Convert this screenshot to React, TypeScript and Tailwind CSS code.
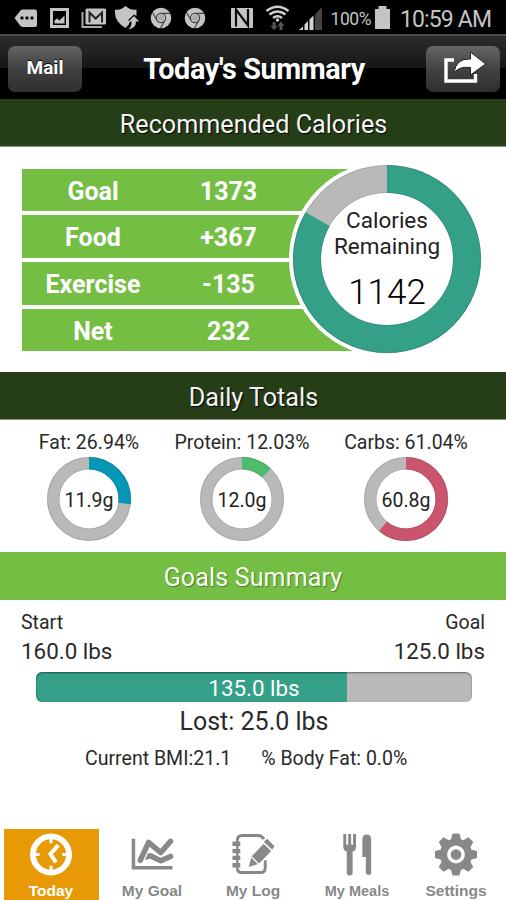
import type { ReactNode } from "react";

const CALORIE_ROWS = [
  { label: "Goal", value: "1373" },
  { label: "Food", value: "+367" },
  { label: "Exercise", value: "-135" },
  { label: "Net", value: "232" },
];

const MACROS = [
  { label: "Fat: 26.94%", grams: "11.9g", share: 0.2694, color: "#0597b5", col: "w-[178px]" },
  { label: "Protein: 12.03%", grams: "12.0g", share: 0.1203, color: "#4dbd6c", col: "w-[128px]" },
  { label: "Carbs: 61.04%", grams: "60.8g", share: 0.6104, color: "#cb556c", col: "w-[200px]" },
];

function Donut({
  size,
  thickness,
  share,
  color,
}: {
  size: number;
  thickness: number;
  share: number;
  color: string;
}) {
  const c = size / 2;
  const r = c - thickness / 2;
  const length = 2 * Math.PI * r;
  return (
    <svg width={size} height={size} viewBox={`0 0 ${size} ${size}`} className="block">
      <circle cx={c} cy={c} r={r} fill="#fff" stroke="#b9b9b9" strokeWidth={thickness} />
      <circle
        cx={c}
        cy={c}
        r={r}
        fill="none"
        stroke={color}
        strokeWidth={thickness}
        strokeDasharray={`${length * share} ${length}`}
        transform={`rotate(-90 ${c} ${c})`}
      />
      <circle cx={c} cy={c} r={c - 0.5} fill="none" stroke="#000" strokeOpacity="0.1" />
      <circle cx={c} cy={c} r={c - thickness + 0.5} fill="none" stroke="#000" strokeOpacity="0.08" />
    </svg>
  );
}

function SectionTitle({ children, tone }: { children: ReactNode; tone: "dark" | "light" }) {
  return (
    <h2
      className={
        tone === "dark"
          ? "flex h-12 items-center justify-center border-b border-[#8b9483] bg-[#263e17] pt-[4px] pl-px text-[25.200px] text-[#f4f4f4] [text-shadow:1px_1px_1px_#000]"
          : "flex h-12 items-center justify-center bg-[#74be43] pt-[4px] text-[25px] tracking-[0.150px] text-[#f8fff2] [text-shadow:1px_1px_1px_#4a7a2c]"
      }
    >
      {children}
    </h2>
  );
}

function StatusBar() {
  return (
    <div className="h-[34px] bg-black">
      <svg width="506" height="34" viewBox="0 0 506 34" className="block" fill="#c4c4c4">
        {/* message tag */}
        <path d="M14.500 18 20.500 10.500Q21.500 9.500 23 9.500H35Q37 9.500 37 11.500V25Q37 27 35 27H23Q21.500 27 20.500 26Z" />
        <g fill="#111">
          <circle cx="22" cy="18" r="1.700" />
          <circle cx="27" cy="18" r="1.700" />
          <circle cx="32" cy="18" r="1.700" />
        </g>
        {/* picture */}
        <path fillRule="evenodd" d="M50 8H69V28H50ZM53 11V25H66V11Z" />
        <path d="M54.500 23.500V20.500L57 18.500 59.500 20.500 64.500 15.500V23.500Z" />
        {/* mail */}
        <path d="M82.500 12V27H102" fill="none" stroke="#aaa" strokeWidth="2" />
        <rect x="85.500" y="8.500" width="20.500" height="16" rx="1.500" />
        <path d="M89.500 22.500V12.500L95.700 18.500 102 12.500V22.500" fill="none" stroke="#222" strokeWidth="2" />
        {/* shield */}
        <path d="M115 9.500Q121 10.500 125.500 6Q130 10.500 136.500 9.500V16L134 14.500 127.500 20.500H130Q130 24 125.500 28Q115 22 115 13Z" />
        <path d="M127 29.500Q132 28 131.500 21.500H128.500L134 16 139 21.500H136Q136 29 127 29.500Z" />
        {/* browsers */}
        {[161, 195].map((x) => (
          <g key={x} transform={`translate(${x} 18)`}>
            <circle r="10.300" />
            <circle r="4.600" fill="none" stroke="#444" strokeWidth="1.200" />
            <circle r="3" fill="#aaa" />
            <path d="M0-4.600H9M-4 2.300-8.500-5.500M4 2.300-.5 10" stroke="#444" strokeWidth="1.200" />
          </g>
        ))}
        {/* nfc */}
        <rect x="231" y="8" width="22" height="20" rx="1" />
        <path
          d="M236 26.500V9.500L248 25.500V9"
          fill="none"
          stroke="#0a0a0a"
          strokeWidth="2.200"
        />
        {/* wifi with traffic arrows */}
        <g fill="none" stroke="#d0d0d0" strokeWidth="2.300">
          <path d="M266.500 11Q277.500 2.500 288.500 11" />
          <path d="M269.500 14.500Q277.500 8.500 285.500 14.500" />
          <path d="M273 18Q277.500 14.500 282 18" />
        </g>
        <circle cx="277.500" cy="20" r="1.800" />
        <path d="M272.500 22H275.500V26H278L274 30 270.500 26H272.500ZM279.500 30H282.500V26H284.500L281 21.500 277.500 26H279.500Z" fill="#555" />
        {/* signal */}
        <path d="M315 14.500 322 7V30H315Z" fill="#444" />
        <path d="M299 30 303 26.500V30ZM304.500 30V24.500L308 21V30ZM309.500 30V19.500L313.500 15.500V30Z" fill="#d4d4d4" />
        {/* battery */}
        <path d="M378.500 6H386.500V9H390V29H375V9H378.500Z" />
        <text x="330.500" y="25" fontSize="17.500" textLength="41" className="font-[Roboto]">
          100%
        </text>
        <text x="400" y="27" fontSize="23" textLength="92" className="font-[Roboto]">
          10:59 AM
        </text>
      </svg>
    </div>
  );
}

function NavBar() {
  return (
    <header className="flex h-[65px] items-start justify-between border-t-2 border-[#4a4a4a] bg-linear-to-b from-[#2d2d2d] from-0% via-[#161616] via-50% to-black to-52% px-2 pt-[10px]">
      <button className="h-[46px] w-[74px] rounded-[7px] bg-linear-to-b from-[#636363] via-[#414141] via-50% to-[#2f2f2f] pb-px text-[19px] font-bold text-white [text-shadow:0_-1px_1px_#000]">
        Mail
      </button>
      <h1 className="pt-[3px] text-[28.800px] leading-[40px] font-bold tracking-[-0.400px] text-white">
        Today's Summary
      </h1>
      <button className="mr-[-2px] flex h-[46px] w-[74px] items-center justify-center rounded-[7px] bg-linear-to-b from-[#666] via-[#424242] via-50% to-[#2f2f2f]">
        <svg width="44" height="36" viewBox="0 0 44 36">
          <path d="M13 9H5V30H34.500V23" fill="none" stroke="#fff" strokeWidth="3.400" />
          <path
            d="M13 22Q15 7 29.500 8V1L44.500 13 29.500 24V16.500Q18 15 13 22Z"
            fill="#fff"
            stroke="#222"
            strokeWidth="1"
          />
        </svg>
      </button>
    </header>
  );
}

function CaloriesPanel() {
  return (
    <section className="relative h-[225px] pt-[21.500px] pl-[22px]">
      <div className="flex w-[330px] flex-col gap-[4.300px]">
        {CALORIE_ROWS.map((row) => (
          <div
            key={row.label}
            className="flex h-[42.500px] items-center bg-[#74be43] pt-[3px] text-center text-[25px] font-bold text-white"
          >
            <span className="w-[142px]">{row.label}</span>
            <span className="w-[129px]">{row.value}</span>
          </div>
        ))}
      </div>
      {/* The ring overlaps the right end of the rows */}
      <div className="absolute top-[14px] left-[289px] rounded-full bg-white p-1">
        <Donut size={188} thickness={28} share={1142 / 1373} color="#35a088" />
        <div className="absolute inset-0 flex flex-col items-center pt-[46px] text-[#222]">
          <span className="text-[22.500px] leading-[26px]">Calories</span>
          <span className="text-[22.500px] leading-[26px]">Remaining</span>
          <span className="mt-[14px] text-[35px] leading-[40px] font-light text-black">1142</span>
        </div>
      </div>
    </section>
  );
}

function MacrosPanel() {
  return (
    <section className="flex h-[132px] pt-[9px]">
      {MACROS.map((m) => (
        <div key={m.label} className={`flex flex-col items-center ${m.col}`}>
          <span className="pt-px text-[19.500px] leading-[26px] whitespace-nowrap text-[#2a2a2a]">
            {m.label}
          </span>
          <div className="relative mt-px">
            <Donut size={84} thickness={12.5} share={m.share} color={m.color} />
            <span className="absolute inset-0 flex items-center justify-center pt-[3px] text-[19.500px] text-[#222]">
              {m.grams}
            </span>
          </div>
        </div>
      ))}
    </section>
  );
}

function GoalsPanel() {
  return (
    <section className="flex h-[229px] flex-col text-[#2a2a2a]">
      <div className="flex justify-between px-[21px] pt-[9px]">
        <div>
          <p className="text-[19.500px] leading-[28px]">Start</p>
          <p className="text-[22.400px] leading-[28px]">160.0 lbs</p>
        </div>
        <div className="text-right">
          <p className="text-[19.500px] leading-[28px]">Goal</p>
          <p className="text-[22.400px] leading-[28px]">125.0 lbs</p>
        </div>
      </div>
      <div className="relative mt-[7px] ml-[36px] h-[30px] w-[436px] overflow-hidden rounded-[6px] bg-[#b9b9b9]">
        <div className="h-full bg-[#35a088]" style={{ width: `${(25 / 35) * 100}%` }} />
        <div className="absolute inset-0 flex items-center justify-center rounded-[6px] pt-[3px] text-[22.400px] text-white shadow-[inset_0_1px_2px_#0007]">
          135.0 lbs
        </div>
      </div>
      <p className="mt-[5px] pl-[2px] text-center text-[25px] leading-[30px]">Lost: 25.0 lbs</p>
      <div className="mt-[9px] flex gap-[30px] pl-[85px] text-[19.550px] leading-[26px] whitespace-nowrap">
        <span>Current BMI:21.1</span>
        <span>% Body Fat: 0.0%</span>
      </div>
    </section>
  );
}

function ClockIcon() {
  return (
    <svg width="44" height="44" viewBox="0 0 44 44" fill="none" stroke="#fff">
      <circle cx="22" cy="22" r="18.500" strokeWidth="6" />
      <path d="M22 6V10.500M22 38V33.500M6 22H10.500M38 22H33.500" strokeWidth="3" />
      <path d="M29.500 12.500 21.500 21.500 27 30" strokeWidth="4.200" />
    </svg>
  );
}

function ChartIcon() {
  return (
    <svg width="44" height="44" viewBox="0 0 44 44" fill="none" stroke="#888">
      <path d="M3 6V35.500H43" strokeWidth="3.600" />
      <path d="M10 28 18.500 9.500 31 20 41 8.500" strokeWidth="5.600" strokeLinecap="round" strokeLinejoin="round" />
      <path d="M21 23.500 31 28.500 41 24" strokeWidth="5.600" strokeLinecap="round" strokeLinejoin="round" />
      <path d="M15.500 27 18.500 20.500 23 25Z" fill="#888" strokeWidth="1" />
    </svg>
  );
}

function LogIcon() {
  return (
    <svg width="44" height="44" viewBox="0 0 44 44" fill="none" stroke="#888">
      <path
        d="M6 7.500Q6 2.500 11 2.500H27Q31.500 2.500 33 6.500M34.500 28V35.500Q34.500 40.500 29.500 40.500H11Q6 40.500 6 36"
        strokeWidth="3"
      />
      <path d="M6 7V36" strokeWidth="2.500" />
      <path d="M1 11H9M1 18.500H9M1 25.500H9M1 33H9" strokeWidth="4.400" />
      {/* pencil */}
      <path d="M17 35.500 20 24 33 10.500 41 18.500 28 32Z" fill="#888" stroke="#fff" strokeWidth="1" />
      <path d="M33 9 36.500 6 44 13.500 41.500 17Z" fill="#888" stroke="none" />
      <path d="M20 24 28 32" stroke="#fff" strokeWidth="1.300" />
    </svg>
  );
}

function MealsIcon() {
  return (
    <svg width="44" height="44" viewBox="0 0 44 44" fill="#888">
      <path d="M8 1H11V12H13V1H16V12H18V1H21V14Q21 18 17.500 19V41Q17.500 43.500 14.500 43.500T11.500 41V19Q8 18 8 14Z" />
      <path d="M27.500 7Q27.500 1.500 32 1.500T36.500 7V41Q36.500 43 34 43T31 41V24.500H27.500Z" />
    </svg>
  );
}

function GearIcon() {
  return (
    <svg width="44" height="44" viewBox="0 0 44 44" fill="#888">
      <circle cx="22" cy="22" r="16.500" />
      {[0, 45, 90, 135, 180, 225, 270, 315].map((deg) => (
        <path key={deg} d="M16.500 8 18.500.5H25.500L27.500 8Z" transform={`rotate(${deg} 22 22)`} />
      ))}
      <circle cx="22" cy="22" r="7.300" stroke="#fff" strokeWidth="3.600" />
    </svg>
  );
}

function TabBar() {
  return (
    <nav className="flex h-[71px] pl-[3.500px] font-['Liberation_Sans',sans-serif] text-[15.500px] leading-[18px] font-bold text-[#888]">
      <div className="flex w-[95px] flex-col items-center bg-[#e79a05] pt-[4px] text-white">
        <ClockIcon />
        <span className="mt-[6px]">Today</span>
      </div>
      <div className="flex w-[107px] flex-col items-center pt-[4px]">
        <ChartIcon />
        <span className="mt-[6px]">My Goal</span>
      </div>
      <div className="flex w-[95px] flex-col items-center pt-[4px]">
        <LogIcon />
        <span className="mt-[6px]">My Log</span>
      </div>
      <div className="flex w-[113px] flex-col items-center pt-[4px]">
        <MealsIcon />
        <span className="mt-[6px] text-[14.500px]">My Meals</span>
      </div>
      <div className="flex w-[85px] flex-col items-center pt-[4px]">
        <GearIcon />
        <span className="mt-[6px]">Settings</span>
      </div>
    </nav>
  );
}

export default function App() {
  return (
    <main className="h-[900px] w-[506px] overflow-hidden bg-white font-[Roboto,sans-serif]">
      <StatusBar />
      <NavBar />
      <SectionTitle tone="dark">Recommended Calories</SectionTitle>
      <CaloriesPanel />
      <SectionTitle tone="dark">Daily Totals</SectionTitle>
      <MacrosPanel />
      <SectionTitle tone="light">Goals Summary</SectionTitle>
      <GoalsPanel />
      <TabBar />
    </main>
  );
}
